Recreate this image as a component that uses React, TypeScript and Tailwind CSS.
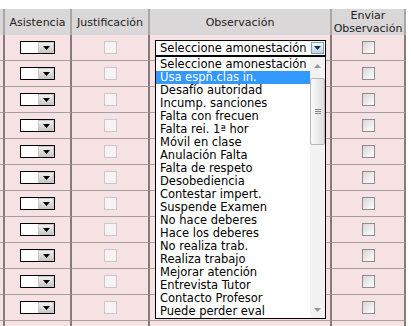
import React from "react";

const options = [
  "Seleccione amonestación",
  "Usa espñ.clas in.",
  "Desafío autoridad",
  "Incump. sanciones",
  "Falta con frecuen",
  "Falta rei. 1ª hor",
  "Móvil en clase",
  "Anulación Falta",
  "Falta de respeto",
  "Desobediencia",
  "Contestar impert.",
  "Suspende Examen",
  "No hace deberes",
  "Hace los deberes",
  "No realiza trab.",
  "Realiza trabajo",
  "Mejorar atención",
  "Entrevista Tutor",
  "Contacto Profesor",
  "Puede perder eval",
];

const rows = Array.from({ length: 12 }, (_, i) => i);

const cols = "grid grid-cols-[5px_67px_78px_182px_74px]";

function Arrow({ color = "#000" }: { color?: string }) {
  return (
    <svg width="7" height="4" viewBox="0 0 7 4">
      <path d="M0 0 H7 L3.5 4 Z" fill={color} />
    </svg>
  );
}

function SmallSelect() {
  return (
    <div className="flex h-[13px] w-[35px] border border-black bg-white">
      <div className="flex-1" />
      <div className="flex w-[16px] items-center justify-center border border-[#c8c8c8] bg-gradient-to-b from-[#f0f0f0] to-[#c9c9c9]">
        <Arrow />
      </div>
    </div>
  );
}

function DisabledBox() {
  return <div className="h-[13px] w-[13px] border border-[#cbc7c7] bg-[#f5f3f3]" />;
}

function CheckBox() {
  return (
    <div className="h-[13px] w-[13px] border border-[#8d8d8d] bg-gradient-to-br from-[#d6d6d6] to-white p-[1px]" />
  );
}

function DropList() {
  return (
    <div className="absolute left-[5px] top-[21px] z-10 flex h-[263px] w-[171px] border border-black bg-white">
      <div className="flex flex-1 flex-col pt-[1px]">
        {options.map((o, i) => (
          <div
            key={o}
            className={
              "h-[13px] pl-[4px] leading-[13px] whitespace-nowrap " +
              (i === 1 ? "bg-[#3399ff] text-white" : "text-black")
            }
          >
            {o}
          </div>
        ))}
      </div>
      <div className="flex w-[15px] flex-col bg-[#f2f2f2]">
        <div className="flex h-[17px] items-center justify-center">
          <svg width="7" height="4" viewBox="0 0 7 4">
            <path d="M0 4 H7 L3.5 0 Z" fill="#9a9a9a" />
          </svg>
        </div>
        <div className="mt-[4px] flex h-[67px] items-center justify-center rounded-[2px] border border-[#b8b8b8] bg-gradient-to-r from-[#fafafa] to-[#dedede]">
          <div className="flex flex-col gap-[1px]">
            <div className="h-px w-[6px] bg-[#8a8a8a]" />
            <div className="h-px w-[6px] bg-[#8a8a8a]" />
            <div className="h-px w-[6px] bg-[#8a8a8a]" />
          </div>
        </div>
        <div className="flex-1" />
        <div className="flex h-[17px] items-center justify-center">
          <Arrow color="#9a9a9a" />
        </div>
      </div>
    </div>
  );
}

export default function App() {
  const head = "flex items-center justify-center border-r-2 border-b border-[#aaa6a6] bg-[#d9d7d7] text-center leading-[13px] text-[#222]";
  const cell = "flex items-center justify-center border-r-2 border-b border-r-[#857b7b] border-b-[#a89d9d] bg-[#f6e2e2]";
  return (
    <div
      className="h-[326px] w-[411px] overflow-hidden bg-white pt-[9px] text-[11px]"
      style={{ fontFamily: '"DejaVu Sans", Verdana, sans-serif' }}
    >
      <div className={cols + " h-[26px] w-[406px]"}>
        <div className={head} />
        <div className={head}>Asistencia</div>
        <div className={head}>Justificación</div>
        <div className={head}>Observación</div>
        <div className={head}>
          Enviar
          <br />
          Observación
        </div>
      </div>
      {rows.map((r) => (
        <div key={r} className={cols + " h-[26px] w-[406px]"}>
          <div className={cell} />
          <div className={cell}>
            <SmallSelect />
          </div>
          <div className={cell}>
            <DisabledBox />
          </div>
          <div className={cell + " relative justify-start"}>
            {r === 0 && (
              <>
                <div className="ml-[5px] flex h-[16px] w-[171px] border border-black bg-white text-[11.5px]">
                  <div className="flex-1 pl-[4px] leading-[14px] whitespace-nowrap">Seleccione amonestación</div>
                  <div className="m-[1px] flex w-[13px] items-center justify-center border border-[#7f9db9] bg-gradient-to-b from-[#f2f6fc] to-[#c3d3ea]">
                    <Arrow color="#1f2f4f" />
                  </div>
                </div>
                <div className="text-[11.5px]">
                  <DropList />
                </div>
              </>
            )}
          </div>
          <div className={cell}>
            <CheckBox />
          </div>
        </div>
      ))}
    </div>
  );
}
